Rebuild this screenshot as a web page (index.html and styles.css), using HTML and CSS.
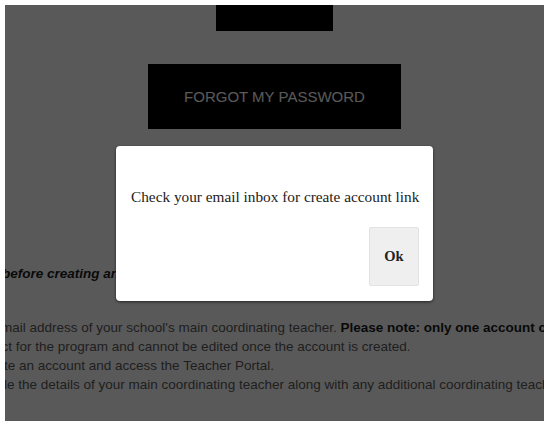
FILE: index.html
```html
<!DOCTYPE html>
<html lang="en">
<head>
<meta charset="utf-8">
<title>Create account</title>
<link rel="stylesheet" href="styles.css">
</head>
<body>
  <div class="screen">
    <main class="page">
      <div class="top-action"></div>
      <a class="forgot" href="#">FORGOT MY PASSWORD</a>

      <section class="notes">
        <p class="lead cut-b">before creating an account</p>
        <p class="line cut-m">mail address of your school's main coordinating teacher. <strong>Please note: only one account can be created per school.</strong></p>
        <p class="line cut-c">ct for the program and cannot be edited once the account is created.</p>
        <p class="line cut-t">te an account and access the Teacher Portal.</p>
        <p class="line cut-l">le the details of your main coordinating teacher along with any additional coordinating teachers.</p>
      </section>
    </main>

    <div class="overlay"></div>

    <div class="dialog" role="dialog" aria-modal="true">
      <p class="dialog-text">Check your email inbox for create account link</p>
      <div class="dialog-actions">
        <button class="ok" type="button">Ok</button>
      </div>
    </div>
  </div>
</body>
</html>
```

FILE: styles.css
```css
html, body {
  margin: 0;
  padding: 0;
  background: #fff;
}

/* visible browser area, inset by a thin white frame */
.screen {
  position: relative;
  margin: 5px 0 0 5px;
  width: 539px;
  height: 416px;
  overflow: hidden;
  background: #fff;
  font-family: "Liberation Sans", Arial, sans-serif;
}

.page {
  display: flex;
  flex-direction: column;
  align-items: center;
}

.top-action {
  width: 117px;
  height: 26px;
  background: #000;
}

.forgot {
  display: flex;
  align-items: center;
  justify-content: center;
  margin-top: 33px;
  width: 253px;
  height: 65px;
  background: #000;
  color: #fff;
  font-size: 15px;
  text-decoration: none;
}

.notes {
  align-self: stretch;
  font-size: 13.5px;
  line-height: 19px;
  color: #5a5a5a;
  white-space: nowrap;
}

.notes p {
  margin: 0;
}

.notes strong {
  color: #1c1c1c;
}

.lead {
  margin-top: 135px !important;
  font-weight: bold;
  font-style: italic;
  color: #1c1c1c;
}

.lead + .line {
  margin-top: 35px;
}

/* lines run off the left edge of the window */
.cut-b { margin-left: -3px !important; }
.cut-m { margin-left: -4px !important; }
.cut-c { margin-left: -3.5px !important; }
.cut-t { margin-left: -1px !important; }
.cut-l { margin-left: -1px !important; }

.overlay {
  position: absolute;
  inset: 0;
  background: rgba(0, 0, 0, 0.65);
}

.dialog {
  position: absolute;
  top: 141px;
  left: 50%;
  margin-left: -158.5px;
  width: 317px;
  box-sizing: border-box;
  padding: 42px 14px 15px 15px;
  background: #fff;
  border-radius: 4px;
  box-shadow: 0 1px 3px rgba(0, 0, 0, 0.6);
  font-family: "Liberation Serif", "Times New Roman", serif;
  color: #222;
}

.dialog-text {
  margin: 0;
  font-size: 15.3px;
  line-height: 18px;
  white-space: nowrap;
}

.dialog-actions {
  display: flex;
  justify-content: flex-end;
  margin-top: 21px;
}

.ok {
  width: 50px;
  height: 59px;
  padding: 0;
  background: #efefef;
  border: 1px solid #e2e2e2;
  border-radius: 2px;
  font-family: "Liberation Serif", "Times New Roman", serif;
  font-weight: bold;
  font-size: 14.5px;
  color: #222;
}
```
